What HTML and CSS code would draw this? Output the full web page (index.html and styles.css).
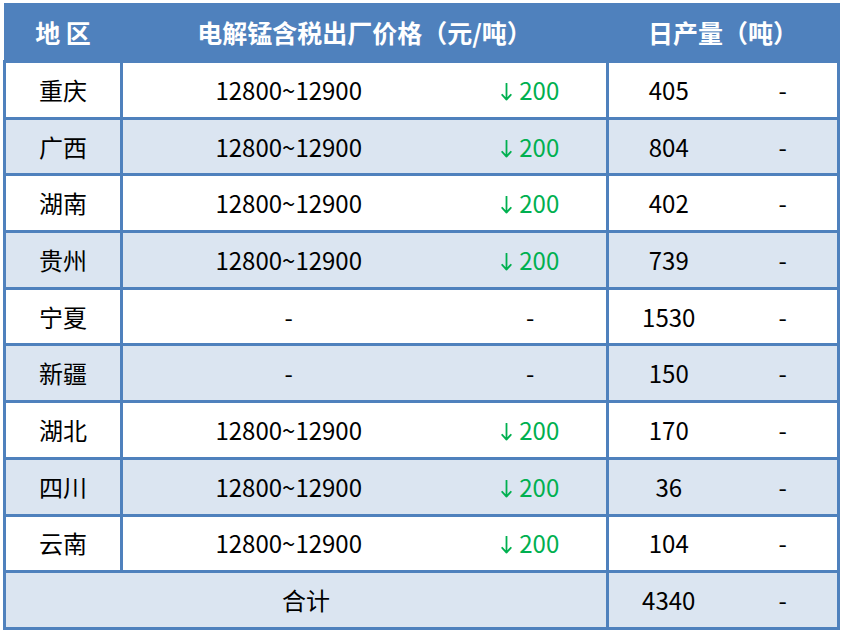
FILE: index.html
```html
<!DOCTYPE html>
<html lang="zh">
<head>
<meta charset="utf-8">
<link rel="stylesheet" href="styles.css">
</head>
<body>
<table class="price-table">
  <colgroup>
    <col class="c-region">
    <col class="c-price">
    <col class="c-change">
    <col class="c-qty">
    <col class="c-qtychg">
  </colgroup>
  <thead>
    <tr class="head-row">
      <th>地 区</th>
      <th colspan="2">电解锰含税出厂价格（元/吨）</th>
      <th colspan="2">日产量（吨）</th>
    </tr>
  </thead>
  <tbody>
    <tr class="row-a"><td class="region">重庆</td><td>12800~12900</td><td class="down"><svg class="arrow" viewBox="0 0 11 18"><path d="M5.5 0.5V16.5M1.2 11.8L5.5 16.6L9.8 11.8"/></svg>200</td><td class="qty">405</td><td>-</td></tr>
    <tr class="row-b"><td class="region">广西</td><td>12800~12900</td><td class="down"><svg class="arrow" viewBox="0 0 11 18"><path d="M5.5 0.5V16.5M1.2 11.8L5.5 16.6L9.8 11.8"/></svg>200</td><td class="qty">804</td><td>-</td></tr>
    <tr class="row-a"><td class="region">湖南</td><td>12800~12900</td><td class="down"><svg class="arrow" viewBox="0 0 11 18"><path d="M5.5 0.5V16.5M1.2 11.8L5.5 16.6L9.8 11.8"/></svg>200</td><td class="qty">402</td><td>-</td></tr>
    <tr class="row-b"><td class="region">贵州</td><td>12800~12900</td><td class="down"><svg class="arrow" viewBox="0 0 11 18"><path d="M5.5 0.5V16.5M1.2 11.8L5.5 16.6L9.8 11.8"/></svg>200</td><td class="qty">739</td><td>-</td></tr>
    <tr class="row-a"><td class="region">宁夏</td><td>-</td><td>-</td><td class="qty">1530</td><td>-</td></tr>
    <tr class="row-b"><td class="region">新疆</td><td>-</td><td>-</td><td class="qty">150</td><td>-</td></tr>
    <tr class="row-a"><td class="region">湖北</td><td>12800~12900</td><td class="down"><svg class="arrow" viewBox="0 0 11 18"><path d="M5.5 0.5V16.5M1.2 11.8L5.5 16.6L9.8 11.8"/></svg>200</td><td class="qty">170</td><td>-</td></tr>
    <tr class="row-b"><td class="region">四川</td><td>12800~12900</td><td class="down"><svg class="arrow" viewBox="0 0 11 18"><path d="M5.5 0.5V16.5M1.2 11.8L5.5 16.6L9.8 11.8"/></svg>200</td><td class="qty">36</td><td>-</td></tr>
    <tr class="row-a"><td class="region">云南</td><td>12800~12900</td><td class="down"><svg class="arrow" viewBox="0 0 11 18"><path d="M5.5 0.5V16.5M1.2 11.8L5.5 16.6L9.8 11.8"/></svg>200</td><td class="qty">104</td><td>-</td></tr>
    <tr class="row-b total"><td colspan="3">合计</td><td class="qty">4340</td><td>-</td></tr>
  </tbody>
</table>
</body>
</html>
```
FILE: styles.css
```css
html, body {
  margin: 0;
  padding: 0;
  background: #ffffff;
}

body {
  padding: 3px 0 0 3px;
  font-family: "Noto Sans CJK SC", "Noto Sans", sans-serif;
}

.price-table {
  border-collapse: collapse;
  table-layout: fixed;
  width: 834px;
  font-size: 24px;
  color: #000;
}

.c-region { width: 117px; }
.c-price { width: 333px; }
.c-change { width: 153px; }
.c-qty { width: 121px; }
.c-qtychg { width: 110px; }

.price-table th,
.price-table td {
  text-align: center;
  vertical-align: middle;
  padding: 0;
  line-height: 1;
}

.head-row th {
  background: #4f81bd;
  color: #ffffff;
  font-weight: bold;
  font-size: 25px;
  height: 55px;
  border: 2px solid #4f81bd;
  border-bottom: 3px solid #4f81bd;
}

.price-table tbody tr {
  height: 56.7px;
}

.price-table tbody td {
  border-top: 3px solid #4f81bd;
  border-bottom: 3px solid #4f81bd;
}

.price-table tbody td.region,
.price-table tbody .total td:first-child {
  border-left: 3px solid #4f81bd;
  border-right: 3px solid #4f81bd;
}

.price-table tbody td.qty {
  border-left: 3px solid #4f81bd;
}

.price-table tbody td:last-child {
  border-right: 3px solid #4f81bd;
}

.row-a { background: #ffffff; }
.row-b { background: #dbe5f1; }

.down { color: #00b050; }

.arrow {
  width: 11px;
  height: 18px;
  margin-right: 7px;
  vertical-align: -1px;
  fill: none;
  stroke: #00b050;
  stroke-width: 1.8;
  stroke-linecap: round;
  stroke-linejoin: round;
}
```
